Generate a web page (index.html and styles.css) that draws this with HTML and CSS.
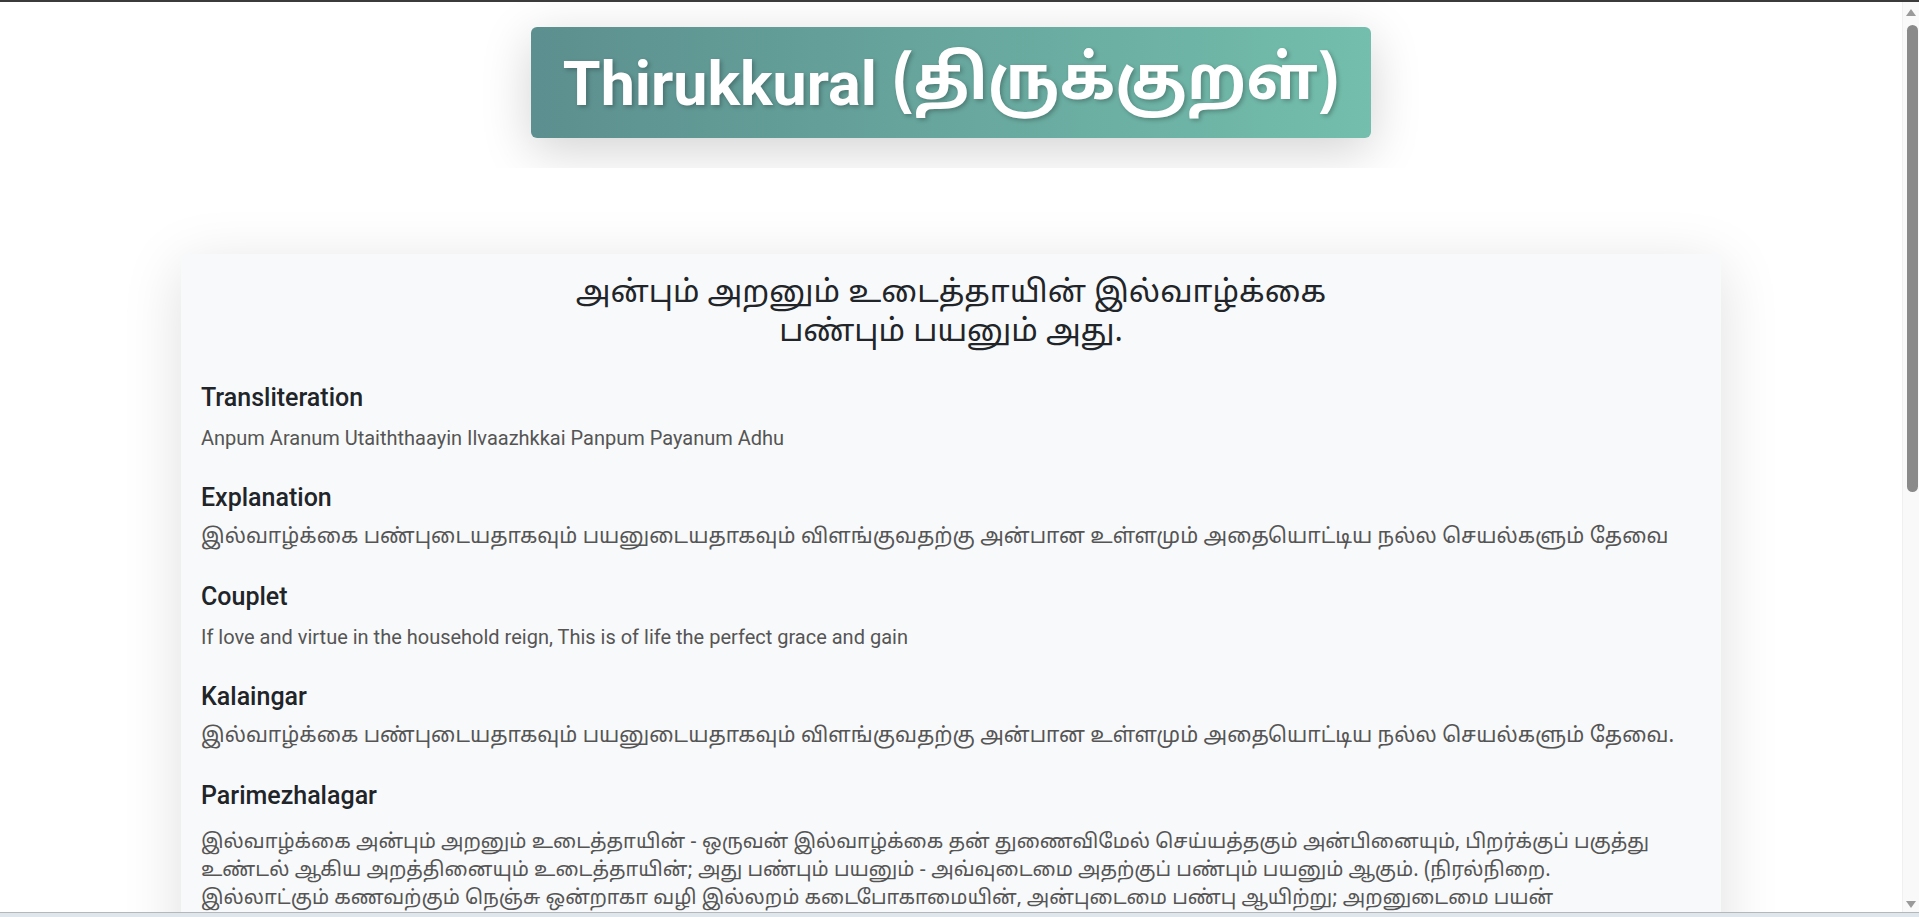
FILE: index.html
```html
<!DOCTYPE html>
<html lang="ta">
<head>
<meta charset="utf-8">
<title>Thirukkural</title>
<link rel="stylesheet" href="styles.css">
</head>
<body>
<div class="topline"></div>
<header class="masthead">
  <h1 class="title">Thirukkural <span class="ta">(திருக்குறள்)</span></h1>
</header>
<main class="card">
  <p class="kural">அன்பும் அறனும் உடைத்தாயின் இல்வாழ்க்கை<br>பண்பும் பயனும் அது.</p>
  <section class="entry">
    <h3>Transliteration</h3>
    <p>Anpum Aranum Utaiththaayin Ilvaazhkkai Panpum Payanum Adhu</p>
  </section>
  <section class="entry">
    <h3>Explanation</h3>
    <p class="ta">இல்வாழ்க்கை பண்புடையதாகவும் பயனுடையதாகவும் விளங்குவதற்கு அன்பான உள்ளமும் அதையொட்டிய நல்ல செயல்களும் தேவை</p>
  </section>
  <section class="entry">
    <h3>Couplet</h3>
    <p>If love and virtue in the household reign, This is of life the perfect grace and gain</p>
  </section>
  <section class="entry">
    <h3>Kalaingar</h3>
    <p class="ta">இல்வாழ்க்கை பண்புடையதாகவும் பயனுடையதாகவும் விளங்குவதற்கு அன்பான உள்ளமும் அதையொட்டிய நல்ல செயல்களும் தேவை.</p>
  </section>
  <section class="entry">
    <h3>Parimezhalagar</h3>
    <p class="ta commentary">இல்வாழ்க்கை அன்பும் அறனும் உடைத்தாயின் - ஒருவன் இல்வாழ்க்கை தன் துணைவிமேல் செய்யத்தகும் அன்பினையும், பிறர்க்குப் பகுத்து உண்டல் ஆகிய அறத்தினையும் உடைத்தாயின்; அது பண்பும் பயனும் - அவ்வுடைமை அதற்குப் பண்பும் பயனும் ஆகும். (நிரல்நிறை.<br>இல்லாட்கும் கணவற்கும் நெஞ்சு ஒன்றாகா வழி இல்லறம் கடைபோகாமையின், அன்புடைமை பண்பு ஆயிற்று; அறனுடைமை பயன்<br>ஆயிற்று. இதனான் இல்வாழ்க்கைக்குப் பண்பும் பயனும் கூறப்பட்டன.)</p>
  </section>
</main>
<div class="scrollbar" aria-hidden="true">
  <span class="arrow up"></span>
  <span class="thumb"></span>
  <span class="arrow down"></span>
</div>
<div class="taskbar" aria-hidden="true"></div>
</body>
</html>
```

FILE: styles.css
```css
html, body {
  margin: 0;
  padding: 0;
}
body {
  background: #ffffff;
  font-family: "Roboto", "Noto Sans Tamil", sans-serif;
  color: #212529;
  margin-right: 17px;
  padding-bottom: 40px;
}
.ta {
  font-family: "Noto Sans Tamil", "Roboto", sans-serif;
}
.topline {
  position: fixed;
  top: 0;
  left: 0;
  right: 0;
  height: 2px;
  background: #3b3b3b;
  z-index: 10;
}
.masthead {
  display: flex;
  justify-content: center;
  padding: 27px 0 30px;
  overflow: hidden;
}
.title {
  margin: 0;
  height: 111px;
  box-sizing: border-box;
  display: flex;
  align-items: center;
  gap: 0.25em;
  padding: 4px 32px 0;
  border-radius: 6px;
  background: linear-gradient(to right, #5c8f8f, #73beac);
  color: #ffffff;
  font-size: 61px;
  font-weight: 700;
  line-height: 1;
  white-space: nowrap;
  text-shadow: 2px 2px 4px rgba(0, 0, 0, 0.25);
  box-shadow: 0 12px 50px rgba(0, 0, 0, 0.18);
}
.card {
  width: 1540px;
  box-sizing: border-box;
  margin: 86px auto 0;
  padding: 20px;
  background: #f8f9fa;
  border-radius: 4px;
  box-shadow: 0 12px 60px rgba(0, 0, 0, 0.13);
}
.kural {
  margin: 1px 0 30px;
  text-align: center;
  font-family: "Noto Sans Tamil", "Roboto", sans-serif;
  font-size: 31px;
  line-height: 39px;
  color: #212529;
}
.entry h3 {
  margin: 0 0 11px;
  font-size: 25px;
  line-height: 30px;
  font-weight: 500;
  color: #212529;
}
.entry p {
  margin: 0 0 30.5px;
  font-size: 20px;
  line-height: 28px;
  color: #555555;
}
.entry p.ta {
  font-size: 21px;
}
.entry p.commentary {
  padding-top: 7px;
  font-size: 20px;
  line-height: 28px;
}
.scrollbar {
  position: fixed;
  top: 2px;
  right: 0;
  bottom: 4px;
  width: 17px;
  background: #f9f9f9;
  border-left: 1px solid #f0f0f0;
  box-sizing: border-box;
  z-index: 5;
}
.arrow {
  position: absolute;
  left: 3px;
  width: 0;
  height: 0;
  border-left: 5px solid transparent;
  border-right: 5px solid transparent;
}
.arrow.up {
  top: 7px;
  border-bottom: 7px solid #9a9a9a;
}
.arrow.down {
  bottom: 5px;
  border-top: 7px solid #9a9a9a;
}
.thumb {
  position: absolute;
  top: 23px;
  left: 4px;
  width: 11px;
  height: 467px;
  border-radius: 6px;
  background: #8a8a8a;
}
.taskbar {
  position: fixed;
  left: 0;
  right: 0;
  bottom: 0;
  height: 4px;
  border-top: 1px solid #b4b8bb;
  background: #dfe7ec;
  z-index: 10;
}
```
